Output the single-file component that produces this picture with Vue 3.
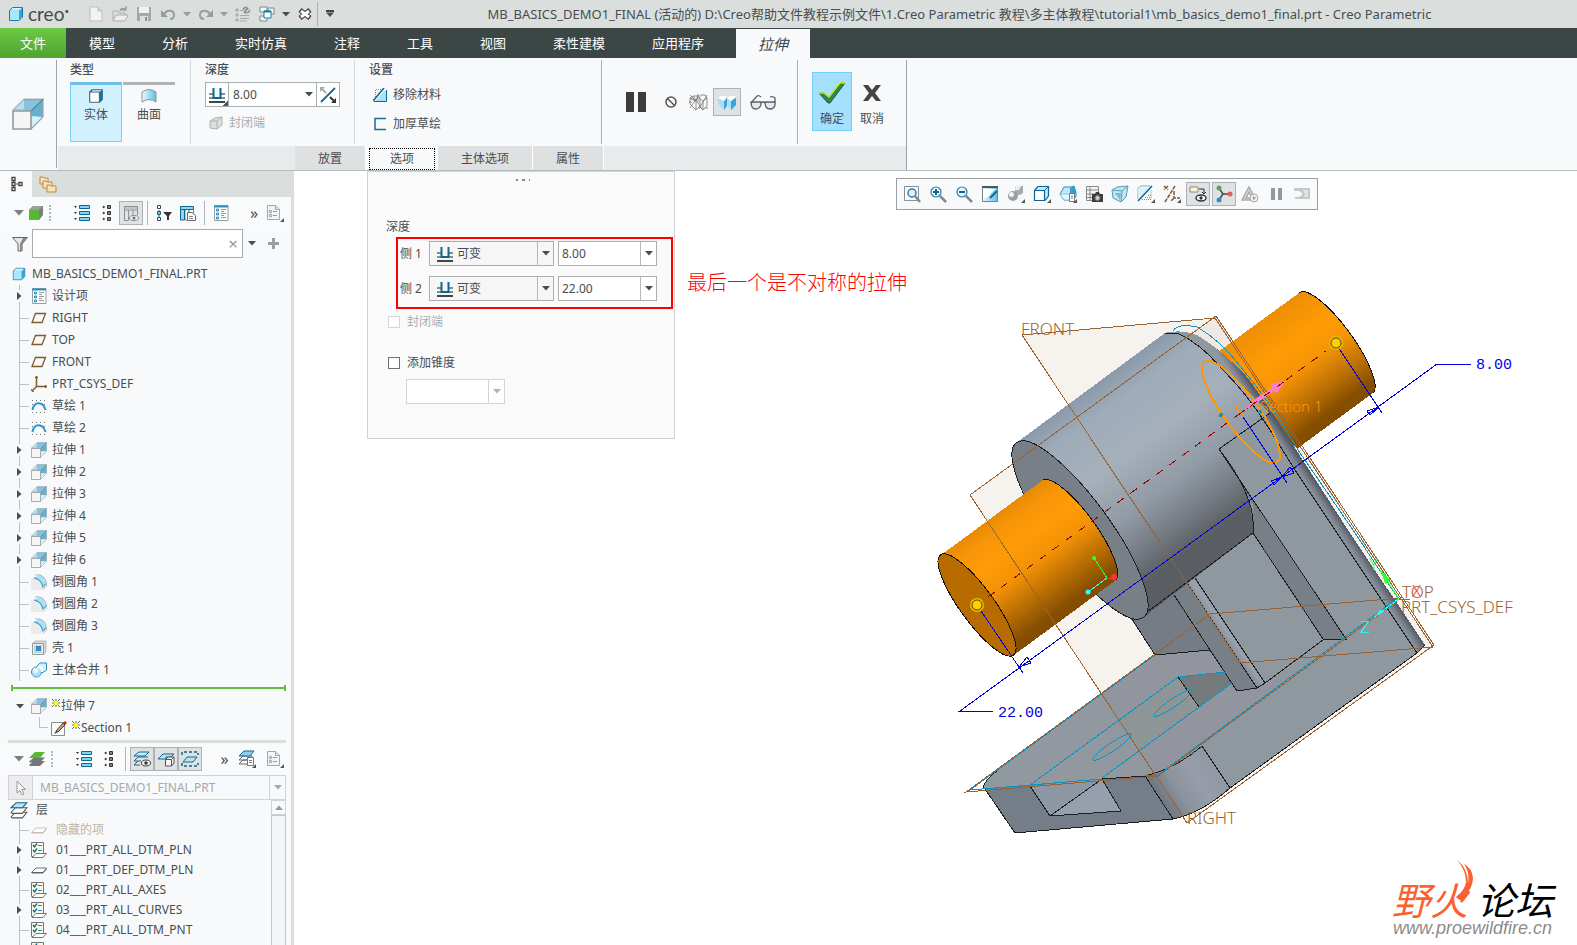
<template>
  <div class="app">
    <svg class="sprite" aria-hidden="true">
      <symbol id="i-part" viewBox="0 0 16 16">
        <path d="M1.5 4.5 4.5 1.5H14.5V11L11 14.5H1.5Z" fill="#9fdcf5" stroke="#1b7aa5" />
        <path d="M2 5H11V14H2Z" fill="#a9e8fc" />
        <path d="M11 5 14 2V11L11 14Z" fill="#3aa3d6" />
        <path d="M3 4 5 2H13L11 4Z" fill="#d9f5ff" />
      </symbol>
      <symbol id="i-new" viewBox="0 0 16 16">
        <path d="M2 1H10L14 5V15H2Z" fill="#f2f3f3" stroke="#b9bdbd" />
        <path d="M10 1V5H14" fill="#d5d8d8" stroke="#b9bdbd" />
      </symbol>
      <symbol id="i-open" viewBox="0 0 16 16">
        <path d="M1 15V5H6L7 7H13V9" fill="#dcdede" stroke="#a9adad" />
        <path d="M1 15 4 9H16L13 15Z" fill="#eceeee" stroke="#a9adad" />
        <path d="M8 5C9 2 11 2 13 3M14 0V4H10" fill="none" stroke="#9a9e9e" stroke-width="1.5" />
      </symbol>
      <symbol id="i-save" viewBox="0 0 16 16">
        <path d="M1 1H15V15H1Z" fill="#a4a8a8" />
        <path d="M3 1H13V7H3Z" fill="#f0f1f1" />
        <path d="M4 10H12V15H4Z" fill="#dcdfdf" />
        <path d="M9 11H11V15H9Z" fill="#8d9191" />
      </symbol>
      <symbol id="i-undo" viewBox="0 0 16 16">
        <path d="M4 8C7 3 14 4 14 9C14 12 12 13 10 13" fill="none" stroke="#979c9c" stroke-width="2" />
        <path d="M1 4V11H8Z" fill="#979c9c" />
      </symbol>
      <symbol id="i-redo" viewBox="0 0 16 16">
        <path d="M12 8C9 3 2 4 2 9C2 12 4 13 6 13" fill="none" stroke="#979c9c" stroke-width="2" />
        <path d="M15 4V11H8Z" fill="#979c9c" />
      </symbol>
      <symbol id="i-regen" viewBox="0 0 16 16">
        <path d="M1 3H3V5H1ZM1 8H3V10H1ZM1 13H3V15H1Z" fill="none" stroke="#a0a4a4" />
        <path d="M5 9.5H14M5 12.5H14M5 15H12M5 4.5H8" stroke="#a6aaaa" />
        <path d="M8 4C9 1 11 1 12 2M15 4C14 7 12 7 10 6" fill="none" stroke="#8b9090" stroke-width="1.5" />
        <path d="M11 0 14 3 11 5ZM11 3 8 6 11 8Z" fill="#8b9090" />
      </symbol>
      <symbol id="i-windows" viewBox="0 0 16 16">
        <path d="M1 1H8V6H1ZM9 2H15V8H9ZM1 10H8V15H1Z" fill="#f5f6f6" stroke="#80868a" />
        <path d="M5 5H12V12H5Z" fill="#fff" stroke="#1b7aa5" />
        <path d="M5 5.5H12" stroke="#1b7aa5" stroke-width="2" />
      </symbol>
      <symbol id="i-closewin" viewBox="0 0 16 16">
        <path d="M3 4 13 12M13 4 3 12" stroke="#444" stroke-width="5" />
        <path d="M4 5 12 11M12 5 4 11" stroke="#fff" stroke-width="3" />
      </symbol>
      <symbol id="i-caret" viewBox="0 0 8 5"><path d="M0 0H8L4 4.5Z" fill="currentColor" /></symbol>
      <symbol id="i-right" viewBox="0 0 5 8"><path d="M0 0V8L4.5 4Z" fill="#4c4f52" /></symbol>
      <symbol id="i-extrude" viewBox="0 0 16 16">
        <path d="M.5 6 6 .5H15.5L9 6Z" fill="#b4def0" stroke="#a4b4bb" stroke-width=".6" />
        <path d="M6 1H15.5L9 7H6Z" fill="#86c3de" />
        <path d="M9 7 15.5 1V9.5H9Z" fill="#69afcc" />
        <path d="M9 15.5V9L15.5 9.5Z" fill="#d4f1fb" />
        <path d="M9.5 15.5 15.5 9.5V.8H6" fill="none" stroke="#9aa3a7" stroke-width=".6" />
        <path d="M9 7 15.5 .8" stroke="#3f8fb3" stroke-width=".7" />
        <path d="M.5 6.5H9.5V15.5H.5Z" fill="#f5f5f5" stroke="#94999b" stroke-width=".8" />
      </symbol>
      <symbol id="i-solid" viewBox="0 0 14 14">
        <path d="M1.5 3.5 3.5 1.5H12.5V10L10 12.5" fill="#1e7397" stroke="#1e7397" />
        <path d="M3 3.5H10L12 2H4Z" fill="#eaf8fe" />
        <path d="M1.5 3.5H10V12.5H1.5Z" fill="#fff" stroke="#4c6572" />
      </symbol>
      <symbol id="i-surface" viewBox="0 0 16 16">
        <path d="M1 4Q8-1 15 4V14Q8 9 1 14Z" fill="url(#g-surf)" stroke="#8f9497" />
      </symbol>
      <symbol id="i-depth" viewBox="0 0 18 16">
        <path d="M1 7H5M13 7H17M1 11H5M13 11H17" stroke="#888c8e" stroke-width="2" />
        <path d="M5.5 1V11H12.5V1" fill="#f0f8fb" stroke="#11668c" stroke-width="2" />
        <path d="M1 15H17" stroke="#444" stroke-width="2" />
      </symbol>
      <symbol id="i-flip" viewBox="0 0 18 18">
        <path d="M2 16 16 2" stroke="#1b6f95" stroke-width="2" />
        <path d="M1 1H6L1 6Z" fill="#aaa" />
        <path d="M3 3 7 7" stroke="#aaa" stroke-width="2" />
        <path d="M17 17H12L17 12Z" fill="#333" />
        <path d="M11 11 15 15" stroke="#333" stroke-width="2" />
      </symbol>
      <symbol id="i-capped" viewBox="0 0 14 14">
        <path d="M1 5 6 2 13 1V9L8 13 1 12Z" fill="#dcdddd" stroke="#b0b2b3" />
        <path d="M1 5 8 5V13M8 5 13 1" fill="none" stroke="#b0b2b3" />
      </symbol>
      <symbol id="i-remove" viewBox="0 0 14 14">
        <path d="M2.5 9V1.5H9" fill="none" stroke="#888" stroke-dasharray="1 1" />
        <path d="M2 13.5 11 3H13.5V13.5Z" fill="#a5e4fb" />
        <path d="M1 13.5H13.5V2" fill="none" stroke="#11668c" />
        <path d="M0 13 11 0" stroke="#11668c" stroke-width="1.5" />
      </symbol>
      <symbol id="i-thicken" viewBox="0 0 14 14">
        <path d="M13 1.5H2V12.5H13" fill="none" stroke="#1b6f95" stroke-width="1.5" />
      </symbol>
      <symbol id="i-pause" viewBox="0 0 24 24">
        <path d="M2 2H10V22H2ZM14 2H22V22H14Z" fill="#3c3c3c" />
      </symbol>
      <symbol id="i-no" viewBox="0 0 14 14">
        <circle cx="7" cy="7" r="5" fill="none" stroke="#555" stroke-width="1.5" />
        <path d="M3 3 11 11" stroke="#555" stroke-width="1.5" />
      </symbol>
      <symbol id="i-wire" viewBox="0 0 20 18">
        <path d="M1 5 4 3H9L7 8ZM1 5V11L7 17V8L1 5ZM7 17 11 13V5M10 5 14 8V17L10 13M14 8 18 5V13L14 17M18 5 16 2H12L10 5M1 15 10 2M10 16 18 2M1 2 7 8M9 1V9M4 3 14 17M16 15H19M0 9H3" fill="none" stroke="#777" stroke-width=".8" />
      </symbol>
      <symbol id="i-preview" viewBox="0 0 20 18">
        <path d="M1 5 7 8V17L1 11Z" fill="#a8dff6" />
        <path d="M7 8 10 5V13L7 17ZM14 8 19 5V12L14 17Z" fill="#35a7dc" />
        <path d="M10 5 14 8V17L10 12Z" fill="#a8dff6" />
        <path d="M1 5 4 3H10L7 8ZM10 5 13 3H19L14 8Z" fill="#fbfdfe" />
      </symbol>
      <symbol id="i-glasses" viewBox="0 0 28 18">
        <path d="M2 9H12V12Q10 16 7 16 2 16 2 9ZM16 9H26V12Q25 16 21 16 16 16 16 9Z" fill="#dcebf5" stroke="#5c6063" stroke-width="1.3" />
        <path d="M12 10Q14 8 16 10M2 10 8 3Q10 2 12 4M26 10V5Q24 3 21 4" fill="none" stroke="#5c6063" stroke-width="1.3" />
      </symbol>
      <symbol id="i-ok" viewBox="0 0 28 22">
        <path d="M1 11H6L11 15 23 1H27L12 21H10Z" fill="#2c8a50" stroke="#195c38" />
        <path d="M1 11H6L11 15 22 1H27" fill="none" stroke="#d2e619" stroke-width="1.5" />
      </symbol>
      <symbol id="i-cancel" viewBox="0 0 20 18">
        <path d="M1 1H6L10 6 14 1H19L13 9 19 17H14L10 12 6 17H1L7 9Z" fill="#444" />
      </symbol>
      <symbol id="i-treetab" viewBox="0 0 16 16">
        <path d="M5.500 4V6M5.500 10V12M8 8H11" stroke="#555" />
        <path d="M4 1.500H7V4.500H4ZM4 6.500H7V9.500H4ZM4 11.500H7V14.500H4ZM11 6.500H14V9.500H11Z" fill="#fff" stroke="#444" stroke-width="1.300" />
      </symbol>
      <symbol id="i-folders" viewBox="0 0 18 18">
        <g fill="#fbe3b2" stroke="#b88b45">
          <path d="M1 2H4L5 3H9V9H1Z" /><path d="M4 6H7L8 7H13V13H4Z" /><path d="M8 10H11L12 11H17V17H8Z" />
        </g>
      </symbol>
      <symbol id="i-greencube" viewBox="0 0 16 16">
        <path d="M1 5 5 1H15V10L11 15" fill="#7b7f80" />
        <path d="M1 5 5 1H15L11 5Z" fill="#9a9e9f" />
        <path d="M1 5H11V15H1Z" fill="#58b735" />
      </symbol>
      <symbol id="i-list" viewBox="0 0 16 16">
        <path d="M0 1H3L1.5 3ZM0 7H3L1.5 9ZM0 13H3L1.5 15Z" fill="#333" />
        <g fill="#7fd3f5" stroke="#11668c"><path d="M5.5 .5H15.5V3.5H5.5ZM5.5 6.5H15.5V9.5H5.5ZM5.5 12.5H15.5V15.5H5.5Z" /></g>
      </symbol>
      <symbol id="i-list2" viewBox="0 0 16 16">
        <path d="M4 1V3L6 2ZM4 7V9L6 8ZM4 13V15L6 14Z" fill="#333" stroke="#333" stroke-width=".5" />
        <g fill="#888" stroke="#333"><path d="M8.5 .5H11.5V3.5H8.5ZM8.5 6.5H11.5V9.5H8.5ZM8.5 12.5H11.5V15.5H8.5Z" /></g>
      </symbol>
      <symbol id="i-coleye" viewBox="0 0 16 16">
        <path d="M1.5 1.5H14.5V5H1.5ZM1.5 5V15.500H5.500V5M10 5V10M14.5 5V10" fill="none" stroke="#8d9193" />
        <path d="M2 2H14V4H2Z" fill="#c3c6c8" />
        <ellipse cx="11" cy="13" rx="4.5" ry="2.5" fill="#eee" stroke="#8d9193" />
        <circle cx="11" cy="13" r="1.5" fill="#777" />
      </symbol>
      <symbol id="i-treefilter" viewBox="0 0 16 16">
        <path d="M3 5V6M3 10V12" stroke="#555" />
        <path d="M1.5 .5H4.5V3.5H1.5ZM1.5 12.5H4.5V15.5H1.5Z" fill="#fff" stroke="#444" />
        <path d="M1.5 6.5H4.5V9.5H1.5Z" fill="#5cc3ee" stroke="#11668c" />
        <path d="M7 7H16L13 11V15H11V11Z" fill="#333" />
      </symbol>
      <symbol id="i-colset" viewBox="0 0 16 16">
        <path d="M5 4.500H13.500V15H5Z" fill="#fff" stroke="#888" />
        <path d="M.5 1.5H13.5V4.5H.5ZM.5 4.5V15H4.5V4.5M9 4.5V8" fill="#8ed8f6" stroke="#11668c" />
        <path d="M7.5 7.5H12L15.5 10.5V15.5H7.5Z" fill="#fff" stroke="#666" />
        <path d="M9 11.5H13M9 13.5H13" stroke="#888" />
      </symbol>
      <symbol id="i-design" viewBox="0 0 16 16">
        <path d="M1.5 .5H15V15.5H1.5Z" fill="#fff" stroke="#9a9ea0" />
        <path d="M1 1.5H15" stroke="#2b8fc0" stroke-width="2" />
        <path d="M3.5 4H5.5V6H3.5ZM3.5 8H5.5V10H3.5ZM3.5 12H5.5V14H3.5Z" fill="#bfe9fa" stroke="#2b8fc0" />
        <path d="M8 4.5H13M8 6.5H11M8 8.5H13M8 10.5H11M8 12.5H13" stroke="#999" />
      </symbol>
      <symbol id="i-doc" viewBox="0 0 18 18">
        <path d="M1.5 1.5H9.5L13.5 5V15.5H1.5Z" fill="#f2f5f6" stroke="#a3a8aa" />
        <path d="M9.5 1.5V5.5H13.5" fill="#dde" stroke="#a3a8aa" />
        <circle cx="4.5" cy="7.5" r="1.2" fill="none" stroke="#888" />
        <circle cx="4.5" cy="11.5" r="1.2" fill="none" stroke="#888" />
        <path d="M7 7.5H11M7 11.5H11" stroke="#999" />
        <path d="M18 14V18H14Z" fill="#555" />
      </symbol>
      <symbol id="i-funnel" viewBox="0 0 16 16">
        <path d="M.5 1.5H15.5L10 8V15H6V8Z" fill="#e3e5e6" stroke="#666" />
        <path d="M10 8 15 2H11L8 8V15H10Z" fill="#888" />
      </symbol>
      <symbol id="i-plane" viewBox="0 0 16 16"><path d="M4.5 3.5H14.5L11 12.5H1Z" fill="none" stroke="#7d5d2b" stroke-width="1.3" /></symbol>
      <symbol id="i-csys" viewBox="0 0 16 16">
        <path d="M5.5 0V10.5H16M5.5 10.5 1 15M4 1.5H7M14.5 9V12M0 13.5 2.5 16" fill="none" stroke="#7d5d2b" stroke-width="1.5" />
      </symbol>
      <symbol id="i-sketch" viewBox="0 0 16 16">
        <path d="M1 2.5H16M1 14.5H16" stroke="#777" stroke-dasharray="1 3" />
        <path d="M1 6.5H3M13 6.5H15" stroke="#777" stroke-dasharray="1 3" />
        <path d="M1.5 12C3 3 12 3 14.5 12" fill="none" stroke="#2f96c8" stroke-width="2" />
      </symbol>
      <symbol id="i-round" viewBox="0 0 16 16">
        <path d="M0 4H3Q11 6 11 13V16H0Z" fill="#ecebea" />
        <path d="M3 4 8 .8Q14 1 15.5 10L11 12Q10 5 3 4Z" fill="#a9e1f7" />
        <path d="M4 1 8 .8Q14 2 15.5 9V12L12 15.500" fill="none" stroke="#a5adb0" stroke-width=".8" />
        <path d="M3 4Q10 5 12 13L15 10" fill="none" stroke="#2f96c8" stroke-width="1.2" />
        <path d="M12 13V16L15.500 12V10Z" fill="#d5d8d9" />
      </symbol>
      <symbol id="i-shell" viewBox="0 0 16 16">
        <path d="M1 4 4 1H15V12L12 15" fill="#d5d7d8" stroke="#b9bdbf" />
        <path d="M1.5 3.5H12.5V14.5H1.5Z" fill="#eee" stroke="#999" />
        <path d="M3 5H11V13H3Z" fill="#aedff1" /><path d="M5 6H10V11H5Z" fill="#3a8cad" />
      </symbol>
      <symbol id="i-merge" viewBox="0 0 16 16">
        <circle cx="5.5" cy="10" r="5" fill="#9fd3ea" stroke="#2b8fc0" />
        <path d="M6 4 9 1H15.5V8L12 10.5H6Z" fill="#d3effa" stroke="#2b8fc0" />
        <path d="M6 4.500H12V10H6Z" fill="#f4fcff" />
        <circle cx="5.500" cy="10" r="4.500" fill="#b5deef" />
        <circle cx="4.500" cy="8.500" r="2.500" fill="#eefaff" />
      </symbol>
      <symbol id="i-star" viewBox="0 0 9 9">
        <path d="M0 0 9 9M9 0 0 9M4.5 0V9M0 4.5H9" stroke="#555" />
        <circle cx="4.5" cy="4.5" r="2.5" fill="#ff0" />
      </symbol>
      <symbol id="i-section" viewBox="0 0 16 16">
        <path d="M.5 2.5H13.5V15.5H.5Z" fill="#fafafa" stroke="#8a8e90" />
        <path d="M5 11 12 3 14 5 7 12Z" fill="#c3a180" stroke="#444" />
        <path d="M12 3 14 1 16 3 14 5Z" fill="#b52b2b" /><path d="M3 14 5 11 7 12Z" fill="#333" />
      </symbol>
      <symbol id="i-greenlayers" viewBox="0 0 18 16">
        <path d="M1 14 6 10H17L12 15H2ZM1 10.5 6 6.5H17L12 11.5H2Z" fill="#737778" />
        <path d="M1 7 7 1H17L12 7Z" fill="#58b735" />
      </symbol>
      <symbol id="i-layers" viewBox="0 0 16 16">
        <path d="M1 14 5 10H15L11 15H2Z" fill="#fff" stroke="#555" stroke-width=".9" />
        <path d="M1 10 5 6H15L11 11H2Z" fill="#fff" stroke="#555" stroke-width=".9" />
        <path d="M1 6 5.5 1.5H15L11 6Z" fill="#b5e4f7" stroke="#11668c" />
      </symbol>
      <symbol id="i-layereye" viewBox="0 0 18 16">
        <path d="M1 5 6 1H16L12 5ZM1 10 5 6H15M1 14 5 10" fill="#c9ecf9" stroke="#11668c" />
        <path d="M1 10H8M1 14H7" stroke="#555" />
        <ellipse cx="13" cy="12" rx="4.5" ry="3" fill="#eee" stroke="#444" /><circle cx="13" cy="12" r="1.7" fill="#333" />
      </symbol>
      <symbol id="i-layercube" viewBox="0 0 18 16">
        <path d="M1 8 6 3H17L14 6H9V8Z" fill="#b5e4f7" stroke="#11668c" />
        <path d="M8.5 8.5H14.5V15H8.5ZM8.5 8.5 11 6H17V12L14.5 15M14.5 8.5 17 6" fill="#f5f5f5" stroke="#555" />
      </symbol>
      <symbol id="i-layerbox" viewBox="0 0 18 16">
        <path d="M1 4V1H17V4M1 12V15H17V12" fill="none" stroke="#11668c" stroke-width="1.5" stroke-dasharray="3 2" />
        <path d="M2 11 6 6H16L12 11Z" fill="#b5e4f7" stroke="#11668c" />
      </symbol>
      <symbol id="i-layerdoc" viewBox="0 0 18 18">
        <path d="M1 14 5 10H11V14ZM1 10 5 6H14V10Z" fill="#fff" stroke="#666" />
        <path d="M1 6 6 1H16L12 6Z" fill="#8ed1ec" stroke="#11668c" />
        <path d="M9.5 7.5H15.5V15.5H9.5Z" fill="#fff" stroke="#777" />
        <path d="M11 10.5H14M11 12.5H14" stroke="#777" /><path d="M18 14V18H14Z" fill="#555" />
      </symbol>
      <symbol id="i-pointer" viewBox="0 0 16 16">
        <path d="M4 1V13L7 10.5 9 15 11 14 9 9.5H12.5Z" fill="#f8f8f8" stroke="#999" />
      </symbol>
      <symbol id="i-flat" viewBox="0 0 16 16">
        <path d="M.5 10.5 5 6H15.5L12 10.5Z" fill="#fff" stroke="currentColor" stroke-width=".8" />
        <path d="M1 11H12L15.500 7" fill="none" stroke="currentColor" stroke-width=".8" />
      </symbol>
      <symbol id="i-check" viewBox="0 0 16 16">
        <path d="M.5 .5H12.5V14.5H.5Z" fill="#fdf6e4" stroke="#777" />
        <path d="M2 3 3.5 5 6 1.5M2 8 3.5 10 6 6.5" fill="none" stroke="#11668c" stroke-width="1.3" />
        <path d="M7 3.5H11M7 8.5H11" stroke="#2b8fc0" />
        <path d="M1 15.5 5 11.5H15.5L12 15.5Z" fill="#fff" stroke="#555" stroke-width=".8" />
      </symbol>
      <!-- graphics toolbar glyphs -->
      <symbol id="v-refit" viewBox="0 0 18 18">
        <path d="M1.5 1.5H15.5V15.5H1.5Z" fill="#fafafa" stroke="#8b8f91" />
        <circle cx="9" cy="8" r="4" fill="#dff3fb" stroke="#2b7fa8" stroke-width="1.5" /><path d="M12 11 17 17" stroke="#888" stroke-width="2.5" />
      </symbol>
      <symbol id="v-zoomin" viewBox="0 0 18 18">
        <circle cx="7" cy="7" r="5" fill="#e8f6fc" stroke="#2b7fa8" stroke-width="1.2" />
        <path d="M4 7H10M7 4V10" stroke="#11668c" stroke-width="2" /><path d="M11 11 17 17" stroke="#888" stroke-width="2.5" />
      </symbol>
      <symbol id="v-zoomout" viewBox="0 0 18 18">
        <circle cx="7" cy="7" r="5" fill="#e8f6fc" stroke="#2b7fa8" stroke-width="1.2" />
        <path d="M4 7H10" stroke="#11668c" stroke-width="2" /><path d="M11 11 17 17" stroke="#888" stroke-width="2.5" />
      </symbol>
      <symbol id="v-repaint" viewBox="0 0 18 18">
        <path d="M1.5 1.5H16.5V16.5H1.5Z" fill="url(#g-surf)" stroke="#7b8184" />
        <path d="M1 2H17" stroke="#555" stroke-width="2" /><path d="M2 4V13Q8 13 10 8L15 4Z" fill="#fff" /><path d="M9 13 16 6" stroke="#11668c" stroke-width="2" />
      </symbol>
      <symbol id="v-shade" viewBox="0 0 18 18">
        <path d="M9 1H16V8L13 10H8V3Z" fill="#a8abad" /><path d="M9 1H14L12 5H8Z" fill="#efefef" />
        <circle cx="6" cy="11" r="5" fill="#9c9fa1" /><circle cx="4.5" cy="9.5" r="2.5" fill="#f2f2f2" /><path d="M18 14V18H14Z" fill="#555" />
      </symbol>
      <symbol id="v-style" viewBox="0 0 18 18">
        <path d="M1.5 5.5 5 1.5H15.5V11L12 15.5" fill="#bfe9fa" stroke="#11668c" stroke-width="1.2" />
        <path d="M12 5 15.5 1.5" stroke="#11668c" /><path d="M1.5 5.5H11.5V15.5H1.5Z" fill="#fff" stroke="#11668c" stroke-width="1.2" /><path d="M18 14V18H14Z" fill="#555" />
      </symbol>
      <symbol id="v-saved" viewBox="0 0 18 18">
        <path d="M1 9 5 2H12L15 1 17 7V12L12 15H5Z" fill="#bfe9f8" stroke="#2b8fc0" /><path d="M1 9H11L12 15H5Z" fill="#e8f8fe" stroke="#7fc4e0" /><path d="M11 9V3L15 1 17 7V9Z" fill="#3a9cca" />
        <path d="M10.5 8.5H15.5V16.5H10.5Z" fill="#fff" stroke="#777" /><path d="M12 11H14M12 13H14" stroke="#777" /><path d="M18 14V18H14Z" fill="#555" />
      </symbol>
      <symbol id="v-camera" viewBox="0 0 18 18">
        <path d="M1.5 1.5H13.5V15.5H1.5ZM1.5 5H13.5M1.5 9H13.5M1.5 12.5H13.5M5 1.5V15.5" fill="#f5f5f5" stroke="#888" />
        <path d="M7 9H10L11 7H14L15 9H18V17H7Z" fill="#3d3d3d" /><circle cx="12.5" cy="13" r="2.5" fill="#ccc" stroke="#777" />
      </symbol>
      <symbol id="v-persp" viewBox="0 0 18 18">
        <path d="M1 5 6 2 17 1 15 12 10 17 2 13Z" fill="#c3e6f3" stroke="#5b9ab5" /><path d="M1 5 11 6 17 1M11 6 10 17" fill="none" stroke="#5b9ab5" /><path d="M4 8 10 8 9 15Z" fill="#7fb9d1" />
      </symbol>
      <symbol id="v-sect" viewBox="0 0 18 18">
        <path d="M1 3 4 1H13M1 3V14" fill="none" stroke="#8ab" /><path d="M1 3H12L1 14Z" fill="#d7f1fb" />
        <path d="M1 16 15 1" stroke="#11668c" stroke-width="1.5" /><path d="M5 14.5H14V5M8 12.5H14M11 10.5H14" fill="none" stroke="#888" stroke-dasharray="1 1" /><path d="M18 14V18H14Z" fill="#555" />
      </symbol>
      <symbol id="v-datum" viewBox="0 0 18 18">
        <path d="M1 1 5 5M5 1 1 5M12 1 2 17M11 6V13H17M11 13 8 16" fill="none" stroke="#7d5d2b" stroke-width="1.5" stroke-dasharray="4 1" /><path d="M18 14V18H14Z" fill="#555" />
      </symbol>
      <symbol id="v-annot" viewBox="0 0 18 18">
        <path d="M1 2H9V7H1Z" fill="#fdf3cf" stroke="#888" /><path d="M10 4H15V8M13 7 15 9 17 7" fill="none" stroke="#333" /><ellipse cx="12" cy="13" rx="5" ry="3" fill="#fff" stroke="#333" stroke-width="1.5" /><circle cx="12" cy="13" r="1.7" fill="#333" />
      </symbol>
      <symbol id="v-spin" viewBox="0 0 18 18">
        <path d="M4 3 8 9 4 15M8 9H14" fill="none" stroke="#444" stroke-width="1.5" /><circle cx="4" cy="3" r="2.5" fill="#58a55a" /><circle cx="4" cy="15" r="2.5" fill="#3a8cc0" /><circle cx="15" cy="9" r="2.5" fill="#e0605b" />
      </symbol>
      <symbol id="v-sim" viewBox="0 0 18 18">
        <path d="M8 2 15 15H1ZM8 7 5 13H11Z" fill="#ddd" fill-rule="evenodd" stroke="#aaa" stroke-width="1.5" /><circle cx="13" cy="13" r="4" fill="#eee" stroke="#aaa" /><path d="M12 11V15L15 13Z" fill="#999" />
      </symbol>
      <symbol id="v-pause" viewBox="0 0 18 18"><path d="M4 3H8V15H4ZM11 3H15V15H11Z" fill="#959899" /></symbol>
      <symbol id="v-end" viewBox="0 0 18 18">
        <path d="M1 3H17V14H3L1 12H6L9 10V8L6 6H1Z" fill="#c6c8c9" /><path d="M10 5H15V12H11L12 9Z" fill="#e3e4e4" />
      </symbol>
      <linearGradient id="g-surf"><stop offset="0" stop-color="#eaf9ff" /><stop offset="1" stop-color="#5fbfe6" /></linearGradient>
    </svg>

    <header class="titlebar">
      <svg class="icon16"><use href="#i-part" /></svg>
      <span class="brand">creo<sup>•</sup></span>
      <div class="quick">
        <template v-for="(q, i) in quickTools" :key="i">
          <button :class="['quick-btn', { narrow: q.icon === 'i-caret', muted: q.muted }]" :aria-label="q.label">
            <svg><use :href="'#' + q.icon" /></svg>
          </button>
        </template>
        <span class="quick-sep"></span>
        <button class="quick-btn more" aria-label="自定义"><svg><use href="#i-caret" /></svg></button>
      </div>
      <h1 class="title">MB_BASICS_DEMO1_FINAL (活动的) D:\Creo帮助文件教程示例文件\1.Creo Parametric 教程\多主体教程\tutorial1\mb_basics_demo1_final.prt - Creo Parametric</h1>
    </header>

    <nav class="menubar">
      <button class="menu-file">文件</button>
      <button v-for="m in menus" :key="m" class="menu-item">{{ m }}</button>
      <button class="menu-active">拉伸</button>
    </nav>

    <section class="ribbon">
      <div class="ribbon-feature"><svg><use href="#i-extrude" /></svg></div>
      <div class="ribbon-main">
        <div class="groups">
          <div class="group type-group">
            <h2>类型</h2>
            <div class="type-row">
              <button class="type-btn selected"><svg><use href="#i-solid" /></svg>实体</button>
              <button class="type-btn"><svg><use href="#i-surface" /></svg>曲面</button>
            </div>
          </div>
          <div class="group depth-group">
            <h2>深度</h2>
            <div class="depth-box">
              <button class="depth-kind" aria-label="深度类型"><svg><use href="#i-depth" /></svg></button>
              <input v-model="side1" aria-label="深度值" />
              <button class="depth-caret" aria-label="展开"><svg class="caret"><use href="#i-caret" /></svg></button>
              <button class="depth-flip" aria-label="反向"><svg><use href="#i-flip" /></svg></button>
            </div>
            <button class="line-btn capped" disabled><svg><use href="#i-capped" /></svg>封闭端</button>
          </div>
          <div class="group set-group">
            <h2>设置</h2>
            <button class="line-btn"><svg><use href="#i-remove" /></svg>移除材料</button>
            <button class="line-btn"><svg><use href="#i-thicken" /></svg>加厚草绘</button>
          </div>
          <div class="group play-group">
            <button class="play pause" aria-label="暂停"><svg><use href="#i-pause" /></svg></button>
            <button class="play small" aria-label="无预览"><svg><use href="#i-no" /></svg></button>
            <button class="play" aria-label="分离"><svg><use href="#i-wire" /></svg></button>
            <button class="play on" aria-label="连接"><svg><use href="#i-preview" /></svg></button>
            <button class="play wide" aria-label="特征预览"><svg><use href="#i-glasses" /></svg></button>
          </div>
          <div class="group end-group">
            <button class="end-btn ok"><svg><use href="#i-ok" /></svg>确定</button>
            <button class="end-btn"><svg class="x"><use href="#i-cancel" /></svg>取消</button>
          </div>
        </div>
        <div class="subtabs">
          <button v-for="t in subtabs" :key="t" :class="['subtab', { active: t === '选项' }]"><span>{{ t }}</span></button>
        </div>
      </div>
    </section>

    <main class="body">
      <aside class="side">
        <div class="side-tabs">
          <button class="side-tab active" aria-label="模型树"><svg class="icon16"><use href="#i-treetab" /></svg></button>
          <button class="side-tab" aria-label="文件夹浏览器"><svg class="icon18"><use href="#i-folders" /></svg></button>
        </div>
        <div class="side-tools">
          <svg class="tri"><use href="#i-caret" /></svg>
          <svg class="icon16"><use href="#i-greencube" /></svg>
          <span class="dots"></span>
          <button class="tool list-tool" aria-label="展开全部"><svg class="icon16"><use href="#i-list" /></svg></button>
          <button class="tool" aria-label="收起全部"><svg class="icon16"><use href="#i-list2" /></svg></button>
          <button class="tool on" aria-label="列显示"><svg class="icon16"><use href="#i-coleye" /></svg></button>
          <span class="bar"></span>
          <button class="tool" aria-label="树过滤器"><svg class="icon16"><use href="#i-treefilter" /></svg></button>
          <button class="tool" aria-label="树列"><svg class="icon16"><use href="#i-colset" /></svg></button>
          <span class="bar"></span>
          <button class="tool" aria-label="设计项"><svg class="icon16"><use href="#i-design" /></svg></button>
          <span class="more-mark">»</span>
          <button class="tool" aria-label="设置"><svg class="icon18"><use href="#i-doc" /></svg></button>
        </div>
        <div class="filter">
          <svg class="icon16"><use href="#i-funnel" /></svg>
          <div class="filter-box"><input aria-label="过滤" /><button aria-label="清除">×</button></div>
          <svg class="caret"><use href="#i-caret" /></svg>
          <button class="plus" aria-label="添加"></button>
        </div>

        <div class="root"><svg class="icon14"><use href="#i-part" /></svg>MB_BASICS_DEMO1_FINAL.PRT</div>
        <ul class="tree">
          <li v-for="n in tree" :key="n.name">
            <button v-if="n.open" class="twist" :aria-label="'展开 ' + n.name"><svg><use href="#i-right" /></svg></button>
            <span v-else class="tick"></span>
            <svg class="icon16"><use :href="'#' + n.icon" /></svg>
            <span>{{ n.name }}</span>
          </li>
        </ul>
        <div class="insert-line"></div>
        <div class="active-row">
          <svg class="caret"><use href="#i-caret" /></svg>
          <svg class="icon16"><use href="#i-extrude" /></svg>
          <svg class="star"><use href="#i-star" /></svg>
          <span>拉伸 7</span>
        </div>
        <div class="active-row child">
          <span class="elbow"></span>
          <svg class="icon16"><use href="#i-section" /></svg>
          <svg class="star"><use href="#i-star" /></svg>
          <span>Section 1</span>
        </div>

        <div class="split"></div>
        <div class="side-tools">
          <svg class="tri"><use href="#i-caret" /></svg>
          <svg class="icon18"><use href="#i-greenlayers" /></svg>
          <span class="dots"></span>
          <button class="tool list-tool" aria-label="展开层"><svg class="icon16"><use href="#i-list" /></svg></button>
          <button class="tool" aria-label="收起层"><svg class="icon16"><use href="#i-list2" /></svg></button>
          <span class="bar"></span>
          <button class="tool on" aria-label="显示层"><svg class="icon18"><use href="#i-layereye" /></svg></button>
          <button class="tool on" aria-label="层项"><svg class="icon18"><use href="#i-layercube" /></svg></button>
          <button class="tool on" aria-label="隔离层"><svg class="icon18"><use href="#i-layerbox" /></svg></button>
          <span class="more-mark">»</span>
          <button class="tool layer-set" aria-label="层设置"><svg class="icon18"><use href="#i-layerdoc" /></svg></button>
          <button class="tool" aria-label="层选项"><svg class="icon18"><use href="#i-doc" /></svg></button>
        </div>
        <div class="layer-model">
          <button disabled aria-label="选取模型"><svg class="icon16"><use href="#i-pointer" /></svg></button>
          <select disabled aria-label="活动模型"><option>MB_BASICS_DEMO1_FINAL.PRT</option></select>
          <span class="cell"><svg class="caret"><use href="#i-caret" /></svg></span>
        </div>
        <div class="layers">
          <div class="layer-list">
            <div class="layer-root"><svg class="icon18"><use href="#i-layers" /></svg>层</div>
            <ul class="tree layer-tree">
              <li v-for="l in layers" :key="l.name" :class="{ hidden: l.hidden }">
                <button v-if="l.open" class="twist" :aria-label="'展开 ' + l.name"><svg><use href="#i-right" /></svg></button>
                <span v-else class="tick"></span>
                <svg class="icon16"><use :href="'#' + l.icon" /></svg>
                <span>{{ l.name }}</span>
              </li>
            </ul>
          </div>
          <div class="scroll"><button aria-label="向上滚动"><svg class="caret"><use href="#i-caret" /></svg></button><div class="thumb"></div></div>
        </div>
      </aside>

      <section class="canvas">
        <svg class="scene" viewBox="294 171 1283 774" preserveAspectRatio="xMaxYMin meet" role="img" aria-label="三维模型">
          <defs>
            <linearGradient id="g-left" gradientUnits="userSpaceOnUse" x1="940" y1="555" x2="1014" y2="656">
              <stop offset="0" stop-color="#e88a04" /><stop offset=".12" stop-color="#f79508" /><stop offset=".3" stop-color="#ff9b06" />
              <stop offset=".5" stop-color="#f39206" /><stop offset=".75" stop-color="#b26a04" /><stop offset=".92" stop-color="#864e00" /><stop offset="1" stop-color="#834c00" />
            </linearGradient>
            <linearGradient id="g-right" gradientUnits="userSpaceOnUse" x1="1299" y1="293" x2="1373" y2="393">
              <stop offset="0" stop-color="#ee8e04" /><stop offset=".3" stop-color="#ff9c04" /><stop offset=".5" stop-color="#f59406" />
              <stop offset=".75" stop-color="#b86d04" /><stop offset=".92" stop-color="#864e00" /><stop offset="1" stop-color="#834c00" />
            </linearGradient>
            <linearGradient id="g-body" gradientUnits="userSpaceOnUse" x1="1016" y1="443" x2="1144" y2="617">
              <stop offset="0" stop-color="#8b9aab" /><stop offset=".12" stop-color="#9eabb9" /><stop offset=".35" stop-color="#a5b0bb" />
              <stop offset=".58" stop-color="#919aa5" /><stop offset=".77" stop-color="#70767d" /><stop offset=".88" stop-color="#5a5d61" /><stop offset="1" stop-color="#5b5f63" />
            </linearGradient>
            <linearGradient id="g-rim" gradientUnits="userSpaceOnUse" x1="1295" y1="470" x2="1304" y2="464">
              <stop offset="0" stop-color="#8f979f" /><stop offset=".4" stop-color="#7d8590" /><stop offset="1" stop-color="#555b66" />
            </linearGradient>
            <linearGradient id="g-fillet" gradientUnits="userSpaceOnUse" x1="1158" y1="798" x2="1216" y2="762">
              <stop offset="0" stop-color="#6c757f" /><stop offset=".3" stop-color="#8a929d" /><stop offset=".65" stop-color="#979eaa" /><stop offset="1" stop-color="#8f97a1" />
            </linearGradient>
            <linearGradient id="g-strip" gradientUnits="userSpaceOnUse" x1="1220" y1="634" x2="1230" y2="627">
              <stop offset="0" stop-color="#858d98" /><stop offset=".6" stop-color="#9ba3b0" /><stop offset="1" stop-color="#8f97a1" />
            </linearGradient>
          </defs>

          <g shape-rendering="crispEdges" fill="none">
            <!-- datum plane tints -->
            <path d="M1022 335 1215 318 1433 647 1240 663Z" fill="#f6f2ee" />
            <path d="M970 495 1216 316 1433 647 1187 823Z" fill="#f6f2ee" />
            <path d="M1150 366 1216 317 1240 352Z" fill="#efe8e3" />

            <!-- right shaft -->
            <path d="M1218 352 1299 293A62 17 54 0 1 1373 393L1298 448 1240 420Z" fill="url(#g-right)" />
            <path d="M1299 293A62 17 54 0 1 1373 393" stroke="#111" />

            <!-- mounting plate -->
            <path d="M1165 333Q1180 329 1197 335Q1222 350 1247 377Q1272 410 1295 448L1348 530 1425 645 1417 653 1230 788 1202 746 1190 680 1165 400Z" fill="#8f979f" />
            <path d="M1165 333Q1180 329 1197 335Q1222 350 1247 377Q1272 410 1295 448L1348 530 1425 645 1417 653 1295 470 1270 430Q1245 393 1220 367 1195 340 1177 333Z" fill="url(#g-rim)" />

            <!-- base -->
            <path d="M983 788 987 779 1012 759 1155 655 1210 650 1237 691 1257 688 1323 640 1346 639 1202 746Q1170 773 1145 776L985 789Z" fill="#92989f" />
            <path d="M1102 693 1155 655 1210 650 1237 691 1257 688 1300 670 1202 746 1158 776Z" fill="#92959d" />
            <path d="M1115 723 1178 677 1199 707 1141 749Z" fill="#8e9596" />
            <path d="M1178 677 1225 672 1232 683 1199 707Z" fill="#757a7c" />
            <path d="M985 789 1145 776 1173 819 1015 833Z" fill="#747d88" />
            <path d="M1030 786 1102 779 1121 811 1050 816Z" fill="#959fae" />
            <path d="M1030 786 1102 779 1050 816Z" fill="#8c97a3" />
            <path d="M1145 776Q1175 769 1202 746L1230 788Q1200 814 1173 819Z" fill="url(#g-fillet)" />
            <path d="M1202 746 1346 640 1417 653 1230 788Z" fill="#8f979f" />

            <!-- ribs -->
            <path d="M1125 610 1174 580 1215 650 1155 655Z" fill="#757c86" />
            <path d="M1170 588 1187 575 1257 688 1237 691Z" fill="#787f87" />
            <path d="M1187 583 1196 574 1265 683 1257 688Z" fill="url(#g-strip)" />
            <path d="M1195 578 1253 533 1323 640 1265 683Z" fill="#8f979f" />
            <path d="M1219 449 1346 639 1323 640 1253 533V505Z" fill="#787f87" />

            <!-- main barrel -->
            <path d="M1016 443 1165 333Q1180 331 1195 342 1222 366 1270 413L1219 449Q1255 495 1253 533L1144 617Z" fill="url(#g-body)" />
            <ellipse cx="1080" cy="530" rx="108" ry="30" transform="rotate(54 1080 530)" fill="#787f87" stroke="#1c1f22" />
            <path d="M1165 333 1177 333Q1200 343 1220 367 1247 393 1270 430L1295 470 1417 653" stroke="#1c1f22" />
            <path d="M1270 413 1219 449 1346 639H1323L1253 533Q1257 498 1219 449" stroke="#1c1f22" />
            <path d="M1253 533 1147 612M1195 578 1265 683 1323 640M1265 683 1257 688M1187 583 1257 688 1237 691 1174 595M1132 619 1155 655 1210 650" stroke="#1c1f22" />
            <path d="M1417 653 1425 645M1417 653 1230 788Q1200 814 1173 819L1015 833 985 789M1145 776 1173 819M1202 746 1230 788M1145 776Q1175 769 1202 746M1102 779 1145 776M983 788Q984 779 1012 759" stroke="#1c1f22" />
            <path d="M1030 786 1050 816 1121 811 1102 779 1050 816M1178 677 1199 707" stroke="#1c1f22" />

            <!-- left shaft -->
            <path d="M941 555 1043 480A62 17 54 0 1 1116 580L1014 655Z" fill="url(#g-left)" />
            <path d="M1043 480A62 17 54 0 1 1116 580" stroke="#111" />
            <ellipse cx="977" cy="605" rx="62" ry="17" transform="rotate(54 977 605)" fill="#b86c00" stroke="#111" />

            <!-- base sketch -->
            <g stroke="#0a95c4">
              <path d="M1155 655 970 790 1102 779M1145 776 1158 775 1398 598" />
              <path d="M1030 785 1178 677 1225 672M1102 778 1232 683" />
              <ellipse cx="1173" cy="703" rx="23" ry="4" transform="rotate(-34 1173 703)" />
              <ellipse cx="1112" cy="747" rx="23" ry="4" transform="rotate(-34 1112 747)" />
              <path d="M1173 331Q1178 323 1197 327 1220 340 1240 366 1272 404 1298 450L1353 530 1398 598" />
            </g>

            <!-- datum planes -->
            <g stroke="#99622f">
              <path d="M1022 335 1215 318 1433 647 1240 663Z" />
              <path d="M970 495 1216 316 1434 645 1187 823Z" />
              <path d="M966 792 1210 614 1401 598 1158 776Z" />
            </g>

            <path d="M988 597 1326 351" stroke="#960000" stroke-dasharray="8 8" />
            <ellipse cx="1241" cy="412" rx="62" ry="17" transform="rotate(54 1241 412)" stroke="#ff9500" stroke-width="2" />
            <path d="M1235 405 1240 413 1244 414" stroke="#ff9500" stroke-width="2" />
            <path d="M1243 411 1258 397 1272 388 1271 384 1285 381 1277 393 1274 391 1258 402Z" fill="#ff7fc4" />
            <path d="M1238 415 1285 381" stroke="#960000" stroke-dasharray="8 8" />
            <circle cx="1221" cy="415" r="2" fill="#1690bd" /><circle cx="1260" cy="412" r="2" fill="#1690bd" />

            <!-- dimensions -->
            <g stroke="#0000e0">
              <path d="M1338 347 1382 413M1243 417 1287 483M979 608 1023 673" />
              <path d="M1471 364H1437L960 711H993" />
              <path d="M1379 407 1367 411 1370 415ZM1282 477 1294 473 1290 467ZM1282 477 1271 481 1274 485ZM1019 667 1031 663 1027 657Z" />
            </g>

            <path d="M1107 578 1094 558M1399 599 1380 570" stroke="#3f3" />
            <path d="M1107 578 1088 592M1399 599 1374 617" stroke="#2ff" />
            <path d="M1107 578H1114M1400 599H1410" stroke="#f33" />
            <path d="M1381 571 1390 580 1385 584Z" fill="#3f3" /><path d="M1375 617 1380 610 1385 611Z" fill="#2ff" />
          </g>
          <circle cx="1094" cy="558" r="2" fill="#3f3" /><circle cx="1088" cy="592" r="2.5" fill="#2ff" /><circle cx="1114" cy="577" r="3" fill="#f33" />
          <g v-for="h in handles" :key="h.x">
            <circle :cx="h.x" :cy="h.y" r="7" fill="#e8b800" /><circle :cx="h.x" :cy="h.y" r="5" fill="#ffcf00" stroke="#54480a" />
          </g>

          <g class="cad">
            <text x="1021" y="335">FRONT</text>
            <text x="1402" y="598">TOP</text>
            <text x="1401" y="613">PRT_CSYS_DEF</text>
            <text x="1187" y="824">RIGHT</text>
            <text class="orange" x="1260" y="412">Section 1</text>
            <text class="green" x="1369" y="570">Y</text>
            <text class="red" x="1412" y="597">X</text>
            <text class="aqua" x="1360" y="633">Z</text>
          </g>
          <g class="dim">
            <text x="1476" y="369">8.00</text>
            <text x="998" y="717">22.00</text>
          </g>
          <text class="note" x="687" y="290">最后一个是不对称的拉伸</text>

          <g class="mark">
            <text class="fire" x="1392" y="915">野火</text>
            <text x="1477" y="915">论坛</text>
            <path d="M1457 860Q1466 870 1466 882Q1465 890 1456 897Q1460 902 1463 899Q1473 888 1473 878Q1472 868 1464 864Q1470 872 1468 884Q1468 868 1457 860Z" fill="#f9622f" />
            <text class="url" x="1393" y="934">www.proewildfire.cn</text>
          </g>
        </svg>

        <form class="options" @submit.prevent>
          <span class="grip"></span>
          <h2>深度</h2>
          <div class="sides">
            <div class="side-row">
              <label for="side1">侧 1</label>
              <div class="combo kind">
                <svg class="icon18"><use href="#i-depth" /></svg>
                <select aria-label="侧 1 类型"><option>可变</option></select>
                <span class="cell"><svg class="caret"><use href="#i-caret" /></svg></span>
              </div>
              <div class="combo">
                <input id="side1" v-model="side1" />
                <button class="cell" aria-label="侧 1 值列表"><svg class="caret"><use href="#i-caret" /></svg></button>
              </div>
            </div>
            <div class="side-row">
              <label for="side2">侧 2</label>
              <div class="combo kind">
                <svg class="icon18"><use href="#i-depth" /></svg>
                <select aria-label="侧 2 类型"><option>可变</option></select>
                <span class="cell"><svg class="caret"><use href="#i-caret" /></svg></span>
              </div>
              <div class="combo">
                <input id="side2" v-model="side2" />
                <button class="cell" aria-label="侧 2 值列表"><svg class="caret"><use href="#i-caret" /></svg></button>
              </div>
            </div>
          </div>
          <label class="check off"><input type="checkbox" disabled />封闭端</label>
          <label class="check taper"><input v-model="taper" type="checkbox" />添加锥度</label>
          <div class="combo off">
            <input aria-label="锥度角" disabled />
            <span class="cell"><svg class="caret"><use href="#i-caret" /></svg></span>
          </div>
        </form>

        <div class="view-tools">
          <button v-for="v in viewTools" :key="v.icon" :class="{ on: v.on }" :aria-label="v.label"><svg class="icon18"><use :href="'#' + v.icon" /></svg></button>
        </div>
      </section>
    </main>
  </div>
</template>

<script setup>
import { ref } from 'vue'

const side1 = ref('8.00')
const side2 = ref('22.00')
const taper = ref(false)

const quickTools = [
  { icon: 'i-new', label: '新建' },
  { icon: 'i-open', label: '打开' },
  { icon: 'i-save', label: '保存' },
  { icon: 'i-undo', label: '撤消' },
  { icon: 'i-caret', label: '撤消列表', muted: true },
  { icon: 'i-redo', label: '重做' },
  { icon: 'i-caret', label: '重做列表', muted: true },
  { icon: 'i-regen', label: '重新生成' },
  { icon: 'i-windows', label: '窗口' },
  { icon: 'i-caret', label: '窗口列表' },
  { icon: 'i-closewin', label: '关闭' }
]

const menus = ['模型', '分析', '实时仿真', '注释', '工具', '视图', '柔性建模', '应用程序']
const subtabs = ['放置', '选项', '主体选项', '属性']

const tree = [
  { name: '设计项', icon: 'i-design', open: true },
  { name: 'RIGHT', icon: 'i-plane' },
  { name: 'TOP', icon: 'i-plane' },
  { name: 'FRONT', icon: 'i-plane' },
  { name: 'PRT_CSYS_DEF', icon: 'i-csys' },
  { name: '草绘 1', icon: 'i-sketch' },
  { name: '草绘 2', icon: 'i-sketch' },
  { name: '拉伸 1', icon: 'i-extrude', open: true },
  { name: '拉伸 2', icon: 'i-extrude', open: true },
  { name: '拉伸 3', icon: 'i-extrude', open: true },
  { name: '拉伸 4', icon: 'i-extrude', open: true },
  { name: '拉伸 5', icon: 'i-extrude', open: true },
  { name: '拉伸 6', icon: 'i-extrude', open: true },
  { name: '倒圆角 1', icon: 'i-round' },
  { name: '倒圆角 2', icon: 'i-round' },
  { name: '倒圆角 3', icon: 'i-round' },
  { name: '壳 1', icon: 'i-shell' },
  { name: '主体合并 1', icon: 'i-merge' }
]

const layers = [
  { name: '隐藏的项', icon: 'i-flat', hidden: true },
  { name: '01___PRT_ALL_DTM_PLN', icon: 'i-check', open: true },
  { name: '01___PRT_DEF_DTM_PLN', icon: 'i-flat', open: true },
  { name: '02___PRT_ALL_AXES', icon: 'i-check' },
  { name: '03___PRT_ALL_CURVES', icon: 'i-check', open: true },
  { name: '04___PRT_ALL_DTM_PNT', icon: 'i-check' },
  { name: '', icon: 'i-check' }
]

const viewTools = [
  { icon: 'v-refit', label: '重新调整' },
  { icon: 'v-zoomin', label: '放大' },
  { icon: 'v-zoomout', label: '缩小' },
  { icon: 'v-repaint', label: '重画' },
  { icon: 'v-shade', label: '渲染选项' },
  { icon: 'v-style', label: '显示样式' },
  { icon: 'v-saved', label: '已保存方向' },
  { icon: 'v-camera', label: '视图管理器' },
  { icon: 'v-persp', label: '透视图' },
  { icon: 'v-sect', label: '截面' },
  { icon: 'v-datum', label: '基准显示' },
  { icon: 'v-annot', label: '注释显示', on: true },
  { icon: 'v-spin', label: '旋转中心', on: true },
  { icon: 'v-sim', label: '仿真' },
  { icon: 'v-pause', label: '暂停仿真' },
  { icon: 'v-end', label: '结束仿真' }
]

const handles = [
  { x: 977, y: 605 },
  { x: 1336, y: 343 }
]
</script>

<style>
body {
  background: #fff;
}
</style>

<style scoped>
.app {
  display: flex;
  flex-direction: column;
  height: 100vh;
  overflow: hidden;
  color: #484d4f;
  font: 12px/18px "Noto Sans", "Noto Sans CJK SC", sans-serif;
}

.app *,
.app *::before {
  box-sizing: border-box;
}

.sprite {
  position: absolute;
  width: 0;
  height: 0;
}

svg {
  flex: none;
  display: block;
}

button,
input,
select {
  margin: 0;
  padding: 0;
  border: 0;
  border-radius: 0;
  background: none;
  color: inherit;
  font: inherit;
  appearance: none;
}

h1,
h2 {
  margin: 0;
  font-size: 12px;
  font-weight: 500;
}

ul {
  margin: 0;
  padding: 0;
  list-style: none;
}

.icon14 { width: 14px; height: 14px; }
.icon16 { width: 16px; height: 16px; }
.icon18 { width: 18px; height: 18px; }
.caret { width: 8px; height: 5px; }

/* title bar */
.titlebar {
  display: flex;
  align-items: center;
  flex: none;
  height: 28px;
  padding-left: 8px;
  background: #dadfde;
}

.brand {
  width: 54px;
  margin-left: 4px;
  color: #454b4c;
  font: 19px/20px Lato, sans-serif;
}

.brand sup {
  font-size: 8px;
  line-height: 1;
}

.quick {
  display: flex;
  align-items: center;
  width: 260px;
  padding-left: 2px;
}

.quick-btn {
  display: grid;
  place-items: center;
  width: 24px;
  height: 24px;
}

.quick-btn svg {
  width: 16px;
  height: 16px;
}

.quick-btn.narrow {
  width: 14px;
}

.quick-btn.narrow svg,
.quick-btn.more svg {
  width: 8px;
  height: 5px;
}

.quick-btn.muted {
  color: #979c9c;
}

.quick-btn.more svg {
  height: 8px;
  border-top: 2px solid #404547;
}

.quick-sep {
  width: 1px;
  height: 24px;
  background: #aab0b0;
}

.title {
  flex: 1;
  min-width: 0;
  font-weight: 400;
  font-size: 13px;
  text-align: center;
  white-space: nowrap;
}

/* menu bar */
.menubar {
  display: flex;
  flex: none;
  height: 30px;
  background: #3c4645;
  color: #fff;
  font-size: 13px;
}

.menu-file {
  width: 66px;
  background: linear-gradient(#6cc944, #4fa32f);
}

.menu-item {
  padding: 0 24px 0 23px;
}

.menu-active {
  width: 74px;
  margin: 1px 0 0 8px;
  background: #f8f9fb;
  color: #404547;
  font-size: 15px;
  font-style: italic;
}

/* ribbon */
.ribbon {
  display: flex;
  flex: none;
  height: 113px;
  border-bottom: 1px solid #b0bebd;
  background: #f8f9fb;
}

.ribbon-feature {
  width: 57px;
  margin: 2px 0;
  padding: 38px 0 0 12px;
  border-right: 1px solid #9ea5a6;
}

.ribbon-feature svg {
  width: 32px;
  height: 32px;
}

.ribbon-main {
  display: flex;
  flex-direction: column;
  width: 850px;
  margin-top: 2px;
  padding-left: 1px;
  border-right: 1px solid #9ea5a6;
}

.groups {
  display: flex;
  height: 84px;
  margin-bottom: 2px;
}

.group {
  padding-top: 1px;
  border-right: 1px solid #d6d9da;
}

.type-group {
  width: 133px;
  padding-left: 12px;
}

.type-row {
  display: flex;
  gap: 1px;
  margin-top: 3px;
}

.type-btn {
  display: flex;
  flex-direction: column;
  align-items: center;
  width: 52px;
  height: 60px;
  padding-top: 3px;
  border-top: 3px solid #b0b2b3;
  line-height: 18px;
}

.type-btn svg {
  width: 16px;
  height: 16px;
  margin-bottom: 2px;
}

.type-btn.selected {
  border: 1px solid #74d0fb;
  border-top: 3px solid #6dc0ea;
  background: #d2f1fe;
}

.depth-group {
  width: 164px;
  padding-left: 14px;
}

.depth-box {
  display: flex;
  width: 135px;
  height: 25px;
  margin-top: 3px;
  border: 1px solid #aab0b2;
  background: #fff;
}

.depth-box button {
  display: grid;
  place-items: center;
}

.depth-kind {
  width: 23px;
  border-right: 1px solid #aab0b2;
  background: linear-gradient(135deg, transparent 50%, #555 50%) right bottom / 5px 5px no-repeat;
}

.depth-box svg {
  width: 18px;
  height: 18px;
}

.depth-box .caret {
  width: 8px;
  height: 5px;
}

.depth-box input {
  flex: 1;
  min-width: 0;
  padding-left: 4px;
}

.depth-caret {
  width: 14px;
}

.depth-flip {
  width: 23px;
  border-left: 1px solid #aab0b2;
}

.line-btn {
  display: flex;
  align-items: center;
  gap: 6px;
  height: 18px;
  margin-top: 7px;
}

.line-btn svg {
  width: 14px;
  height: 14px;
}

.line-btn + .line-btn {
  margin-top: 11px;
}

.line-btn.capped {
  margin: 7px 0 0 4px;
  color: #a9acae;
}

.set-group {
  width: 247px;
  padding-left: 14px;
}

.set-group .line-btn {
  margin-left: 4px;
}

.set-group,
.play-group {
  border-color: #aab0b1;
}

.play-group {
  display: flex;
  align-items: center;
  width: 196px;
  padding: 0 0 1px 20px;
}

.play {
  display: grid;
  place-items: center;
  width: 28px;
  height: 28px;
}

.play svg {
  width: 20px;
  height: 18px;
}

.play.pause svg {
  width: 24px;
  height: 24px;
}

.play.small {
  width: 28px;
  margin-left: 7px;
}

.play.small svg {
  width: 14px;
  height: 14px;
}

.play.on {
  border: 1px solid #aeb2b4;
  background: #dfe1e3;
}

.play.wide {
  width: 44px;
}

.play.wide svg {
  width: 28px;
}

.end-group {
  display: flex;
  padding: 12px 0 0 14px;
  border-right: 0;
}

.end-btn {
  display: flex;
  flex-direction: column;
  align-items: center;
  width: 40px;
  height: 59px;
  padding-top: 9px;
  border: 1px solid transparent;
}

.end-btn svg {
  width: 28px;
  height: 22px;
  margin-bottom: 6px;
}

.end-btn svg.x {
  width: 20px;
  height: 18px;
  margin: 2px 0 8px;
}

.end-btn.ok {
  border-color: #74cdf7;
  background: #a5e0ff;
}

.subtabs {
  display: flex;
  height: 24px;
  padding-left: 237px;
  background: #e9eaec;
}

.subtab {
  padding: 3px 23px 2px;
  border-right: 1px solid #fff;
  background: #dfe0e2;
}

.subtab.active {
  padding: 2px 2px 1px 3px;
  background: #f8f9fb;
}

.subtab.active span {
  display: block;
  padding: 1px 20px;
  border: 1px dotted #000;
}

/* left side */
.body {
  display: flex;
  flex: 1;
  min-height: 0;
}

.side {
  display: flex;
  flex-direction: column;
  flex: none;
  width: 294px;
  border-right: 3px solid #dadfde;
  background: #f8f9fb;
}

.side-tabs {
  display: flex;
  flex: none;
  height: 26px;
  margin-right: -3px;
  background: #dadfde;
}

.side-tab {
  display: grid;
  place-items: center;
  width: 32px;
}

.side-tab.active {
  background: #f8fafb;
}

.side-tools {
  display: flex;
  align-items: center;
  flex: none;
  height: 32px;
  padding: 0 4px 0 14px;
  background: #f8fafb;
}

.tri {
  width: 10px;
  height: 8px;
  margin-right: 4px;
  color: #7b7f80;
}

.dots {
  width: 2px;
  height: 16px;
  margin-left: 5px;
  border-left: 2px dotted #b4b7b8;
}

.tool {
  display: grid;
  place-items: center;
  width: 24px;
  height: 24px;
}

.list-tool {
  margin: 0 1px 0 19px;
}

.layer-set {
  margin-right: 4px;
}

.tool.on {
  border: 1px solid #aeb2b4;
  background: #dfe1e3;
}

.bar {
  width: 1px;
  height: 24px;
  margin: 0 4px;
  background: #b0b4b5;
}

.more-mark {
  flex: 1;
  padding-left: 12px;
  text-align: center;
  font-size: 16px;
}

.filter {
  display: flex;
  align-items: center;
  flex: none;
  height: 29px;
  margin-bottom: 5px;
  padding-left: 12px;
}

.filter-box {
  display: flex;
  flex: none;
  width: 211px;
  height: 29px;
  margin: 0 5px 0 4px;
  border: 1px solid #a3adb1;
  background: #fff;
}

.filter-box input {
  flex: 1;
  min-width: 0;
}

.filter-box button {
  width: 18px;
  color: #999;
  font-size: 17px;
}

.plus {
  width: 11px;
  height: 11px;
  margin-left: 12px;
  background:
    linear-gradient(#9b9fa0, #9b9fa0) center / 11px 3px no-repeat,
    linear-gradient(#9b9fa0, #9b9fa0) center / 3px 11px no-repeat;
}

.root {
  display: flex;
  align-items: center;
  flex: none;
  gap: 6px;
  height: 22px;
  padding-left: 12px;
}

.tree {
  flex: none;
  background: linear-gradient(#bcc0c2, #bcc0c2) 19px 0 / 1px 100% no-repeat;
}

.tree li {
  display: flex;
  align-items: center;
  height: 22px;
  padding-left: 16px;
  white-space: nowrap;
}

.tree li .icon16 {
  margin: 0 5px 0 2px;
}

.twist {
  width: 13px;
  height: 12px;
  padding: 2px 0 2px 1px;
  background: #f8f9fb;
}

.twist svg {
  width: 5px;
  height: 8px;
}

.tick {
  width: 9px;
  height: 1px;
  margin-left: 4px;
  background: #bcc0c2;
}

.insert-line {
  display: flex;
  align-items: center;
  flex: none;
  height: 14px;
  margin: 0 5px 0 11px;
}

.insert-line::before {
  content: "";
  flex: 1;
  height: 6px;
  border: 1px solid #5cc23c;
  border-width: 0 2px;
  background: linear-gradient(#5cc23c, #5cc23c) center / 100% 2px no-repeat;
}

.active-row {
  display: flex;
  align-items: center;
  flex: none;
  height: 22px;
  padding-left: 16px;
}

.active-row .caret {
  margin-right: 7px;
}

.star {
  align-self: flex-start;
  width: 8px;
  height: 8px;
  margin: 4px 1px 0 5px;
}

.child {
  padding-left: 39px;
}

.elbow {
  align-self: flex-start;
  width: 9px;
  height: 11px;
  margin-right: 3px;
  border: 1px solid #bcc0c2;
  border-width: 0 0 1px 1px;
}

.split {
  flex: none;
  height: 3px;
  margin: 1px 5px 0 8px;
  background: #dadfde;
}

.layer-model {
  display: flex;
  flex: none;
  height: 25px;
  margin: 0 5px 0 8px;
  border: 1px solid #cfd3d4;
  color: #a6a9ab;
}

.layer-model button {
  display: grid;
  place-items: center;
  width: 24px;
  border-right: 1px solid #cfd3d4;
  background: #ececee;
}

.layer-model select {
  flex: 1;
  min-width: 0;
  padding-left: 7px;
  opacity: 1;
}

.cell {
  display: grid;
  place-items: center;
  width: 16px;
  border-left: 1px solid #b4b8b9;
}

.layer-model .cell,
.off .cell {
  border-color: #cfd3d4;
}

.layers {
  display: flex;
  flex: 1;
  min-height: 0;
  overflow: hidden;
}

.layer-list {
  flex: 1;
  min-width: 0;
}

.layer-root {
  display: flex;
  align-items: center;
  gap: 8px;
  height: 20px;
  padding-left: 10px;
}

.layer-tree li {
  height: 20px;
}

.layer-tree li .icon16 {
  margin-right: 9px;
}

.layer-tree .hidden {
  color: #bdb5a2;
}

.scroll {
  display: flex;
  flex-direction: column;
  width: 15px;
  margin-right: 5px;
}

.scroll button {
  display: grid;
  place-items: center;
  height: 15px;
  border: 1px solid #cfd3d4;
  color: #999;
}

.scroll .caret {
  transform: rotate(180deg);
}

.thumb {
  flex: 1;
  border: 1px solid #c2c6c7;
  border-bottom: 0;
  background: #f4f5f6;
}

/* graphics area */
.canvas {
  position: relative;
  flex: 1;
  min-width: 0;
  background: #fff;
}

.scene {
  width: 100%;
  height: 100%;
}

.cad {
  fill: #99622f;
  font: 300 17px "Noto Sans", sans-serif;
}

.cad .orange {
  fill: #ff9500;
  font-size: 15px;
}

.cad .green { fill: #3f3; }
.cad .red { fill: #f33; }
.cad .aqua { fill: #2ff; }

.dim {
  fill: #0000e0;
  font: 15px "Liberation Mono", monospace;
}

.note {
  fill: #f00;
  font: 300 20px "Noto Sans CJK SC", serif;
}

.mark {
  font: italic 400 38px "Noto Sans CJK SC", sans-serif;
}

.fire {
  fill: #f9622f;
}

.url {
  fill: #8c8c8c;
  font: italic 18px "Liberation Sans", sans-serif;
}

.view-tools {
  position: absolute;
  top: 7px;
  right: 259px;
  display: flex;
  gap: 2px;
  padding: 3px;
  border: 1px solid #9ba1a3;
  background: #f8f9fb;
}

.view-tools button {
  display: grid;
  place-items: center;
  width: 24px;
  height: 24px;
}

.view-tools .on {
  border: 1px solid #aeb2b4;
  background: #dfe1e3;
}

.options {
  position: absolute;
  top: 0;
  left: 73px;
  width: 308px;
  padding-bottom: 34px;
  border: 1px solid #cfd3d5;
  background: #fafafb;
}

.grip {
  display: block;
  width: 18px;
  height: 2px;
  margin: 7px auto 37px;
  border-top: 2px dotted #888;
  border-image: repeating-linear-gradient(90deg, #888 0 2px, transparent 2px 5px) 2;
}

.options h2 {
  margin-left: 18px;
  font-weight: 400;
}

.sides {
  display: flex;
  flex-direction: column;
  gap: 10px;
  margin: 1px 1px 4px 28px;
  padding: 2px 2px 6px;
  border: 2px solid #f00;
}

.side-row {
  display: flex;
  align-items: center;
  gap: 4px;
}

.side-row label {
  width: 25px;
  white-space: nowrap;
}

.combo {
  display: flex;
  width: 99px;
  height: 25px;
  border: 1px solid #aab0b2;
  background: #fff;
}

.combo.kind {
  width: 125px;
  background: #f6f6f7;
}

.combo .icon18 {
  align-self: center;
  height: 16px;
  margin: 0 3px 0 6px;
}

.combo select,
.combo input {
  flex: 1;
  min-width: 0;
}

.combo input {
  padding-left: 3px;
}

.check {
  display: flex;
  align-items: center;
  gap: 7px;
  margin-left: 20px;
}

.check input {
  width: 12px;
  height: 12px;
  border: 1px solid #6d7173;
  background: #fff;
}

.check.off {
  color: #a9acae;
}

.check.off input,
.combo.off {
  border-color: #d3d5d6;
}

.taper {
  margin-top: 23px;
}

.combo.off {
  margin: 7px 0 0 38px;
  color: #b0b3b4;
}
</style>
